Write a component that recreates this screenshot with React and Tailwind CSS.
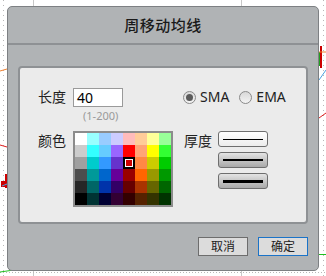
import React from 'react';

const palette = [
  ['#ffffff', '#99ffff', '#99ccff', '#ccccff', '#ffbbbb', '#ffcc99', '#ffff99', '#99ff99'],
  ['#cccccc', '#33ffff', '#66ccff', '#9966ff', '#ff0000', '#ffa477', '#ffff00', '#33ff33'],
  ['#a0a0a0', '#00cccc', '#3399ff', '#6633cc', '#cc0000', '#ff8844', '#cccc00', '#00cc00'],
  ['#4d4d4d', '#009999', '#0066cc', '#660099', '#990000', '#ff6600', '#999900', '#009900'],
  ['#262626', '#006666', '#0033aa', '#330066', '#660000', '#aa3300', '#666600', '#006600'],
  ['#000000', '#003333', '#000033', '#330033', '#330000', '#552200', '#333300', '#003300'],
];

const cjk = { fontFamily: '"Noto Sans", "Noto Sans CJK SC", sans-serif' };

function ChartBackdrop() {
  return (
    <svg className="absolute inset-0" width="326" height="276" viewBox="0 0 326 276">
      <line x1="3.5" y1="0" x2="3.5" y2="276" stroke="#b8b8b8" strokeDasharray="1 4" />
      <line x1="323.5" y1="0" x2="323.5" y2="276" stroke="#b8b8b8" strokeDasharray="1 4" />
      <line x1="33.5" y1="0" x2="33.5" y2="6" stroke="#c8c8c8" />
      <line x1="241.5" y1="0" x2="241.5" y2="6" stroke="#c8c8c8" />
      <line x1="33.5" y1="271" x2="33.5" y2="276" stroke="#c8c8c8" />
      <line x1="241.5" y1="271" x2="241.5" y2="276" stroke="#c8c8c8" />
      <line x1="0" y1="272.5" x2="326" y2="272.5" stroke="#b8b8b8" strokeDasharray="1 2" />
      <line x1="0" y1="71" x2="7" y2="69" stroke="#f08030" />
      <line x1="0" y1="145" x2="7" y2="147" stroke="#e02020" />
      <rect x="5" y="174" width="2" height="14" fill="#cc0000" />
      <rect x="1" y="181" width="4" height="6" fill="#cc0000" />
      <line x1="2" y1="186" x2="7" y2="184" stroke="#4aa0e0" />
      <rect x="320" y="46" width="2" height="22" fill="#cc0000" />
      <rect x="319" y="52" width="1" height="14" fill="#20a020" />
      <line x1="319" y1="52" x2="326" y2="52" stroke="#f08030" />
      <line x1="319" y1="80" x2="326" y2="70" stroke="#4aa0e0" />
      <line x1="319" y1="118" x2="326" y2="113" stroke="#e02020" />
      <line x1="319" y1="254.5" x2="326" y2="254.5" stroke="#20c020" />
      <line x1="0" y1="272" x2="14" y2="270" stroke="#20c020" />
    </svg>
  );
}

function Radio({ checked, label }) {
  return (
    <label className="flex items-center gap-[4px]">
      <span className="w-[13px] h-[13px] rounded-full border border-[#8a8a8a] bg-gradient-to-b from-[#d8d8d8] to-[#f4f4f4] flex items-center justify-center">
        {checked && <span className="w-[7px] h-[7px] rounded-full bg-[#5a5a5a]" />}
      </span>
      <span className="text-[14px] leading-[18px] text-[#222]">{label}</span>
    </label>
  );
}

function LineButton({ weight, active }) {
  const lines = { 1: 'h-[1px]', 2: 'h-[2px]', 3: 'h-[3px]' };
  return (
    <button
      className={
        'w-[50px] h-[16px] rounded-[3px] border border-[#6e6e6e] flex items-center justify-center ' +
        (active ? 'bg-gradient-to-b from-[#ffffff] to-[#ececec]' : 'bg-gradient-to-b from-[#e4e4e4] to-[#a9a9a9]')
      }
    >
      <span className={'w-[40px] bg-black ' + lines[weight]} />
    </button>
  );
}

export default function App() {
  return (
    <div className="relative w-[326px] h-[276px] bg-white overflow-hidden" style={cjk}>
      <ChartBackdrop />

      <div className="absolute left-[7px] top-[6px] w-[312px] h-[265px] rounded-[5px] border border-[#7d8083] bg-[#b0b3b5] flex flex-col">
        <div className="h-[38px] flex items-center justify-center border-b-2 border-[#8e9194]">
          <span className="text-[15px] font-medium text-[#1a1a1a] tracking-[0.5px]">周移动均线</span>
        </div>

        <div className="mt-[21px] ml-[10px] w-[290px] h-[158px] rounded-[4px] border-2 border-[#8e9194] bg-[#ebebeb] pt-[20px] pl-[18px]">
          <div className="flex items-start">
            <span className="w-[35px] text-[14px] leading-[18px] text-[#222]">长度</span>
            <div className="flex flex-col">
              <div className="w-[50px] h-[19px] border border-[#9a9a9a] bg-white pl-[3px] text-[14px] leading-[17px] text-black">40</div>
              <span className="ml-[10px] mt-[2px] text-[11px] leading-[14px] text-[#9a9a9a]">(1-200)</span>
            </div>
            <div className="ml-[60px] flex items-center gap-[10px]">
              <Radio checked label="SMA" />
              <Radio label="EMA" />
            </div>
          </div>

          <div className="mt-[8px] flex items-start">
            <span className="w-[35px] mt-[1px] text-[14px] leading-[18px] text-[#222]">颜色</span>
            <div className="w-[100px] h-[76px] border-2 border-[#8c8c8c] bg-white grid grid-cols-8">
              {palette.flat().map((c, i) =>
                i === 20 ? (
                  <div key={i} className="w-[12px] h-[12px] border-2 border-black bg-white p-[1px]">
                    <div className="w-full h-full" style={{ background: c }} />
                  </div>
                ) : (
                  <div key={i} className="w-[12px] h-[12px]" style={{ background: c }} />
                )
              )}
            </div>
            <span className="ml-[11px] w-[34px] mt-[1px] text-[14px] leading-[18px] text-[#222]">厚度</span>
            <div className="flex flex-col gap-[5px]">
              <LineButton weight={1} active />
              <LineButton weight={2} />
              <LineButton weight={3} />
            </div>
          </div>
        </div>

        <div className="mt-[13px] mr-[10px] flex justify-end gap-[10px]">
          <button className="w-[50px] h-[19px] border border-[#6d6d6d] bg-[#dcdcdc] text-[12px] leading-[17px] text-[#222]">取消</button>
          <button className="w-[50px] h-[19px] border border-[#1a73c8] bg-[#dcdcdc] text-[12px] leading-[17px] text-[#222]">确定</button>
        </div>
      </div>
    </div>
  );
}
